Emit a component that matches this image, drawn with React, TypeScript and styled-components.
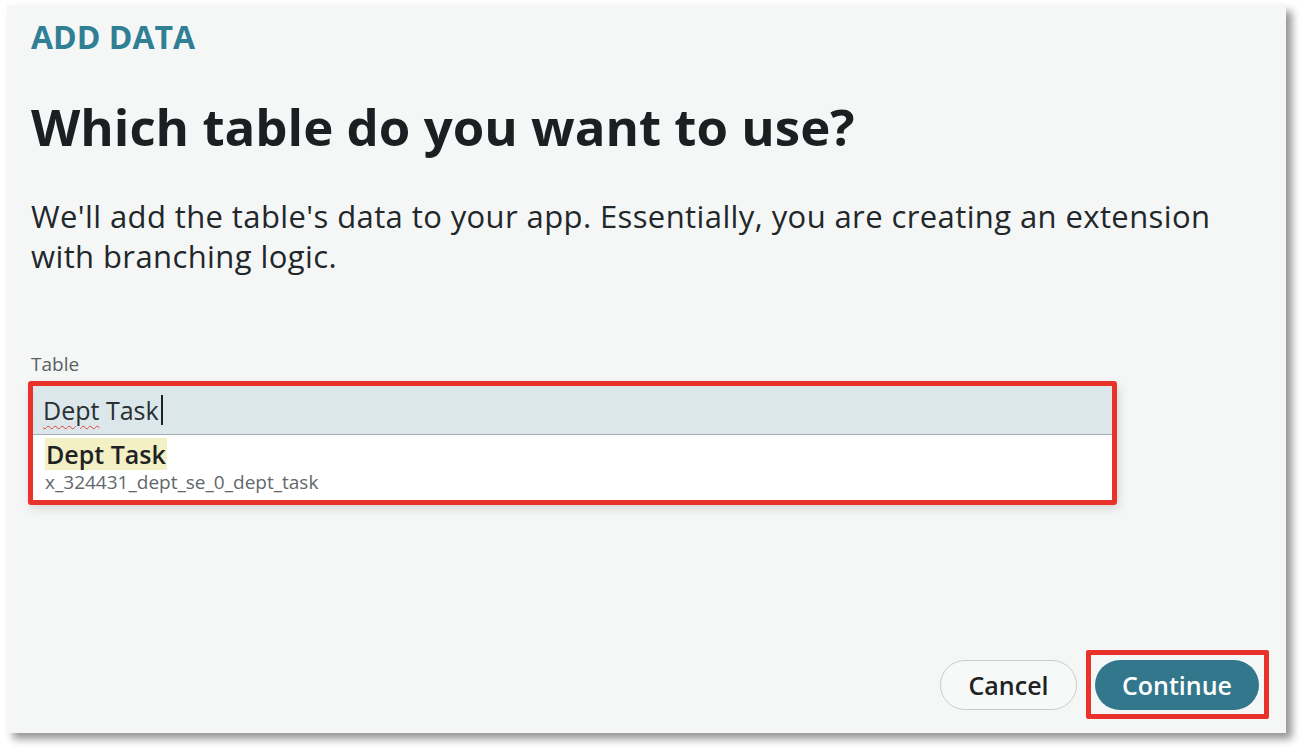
import React from "react";
import styled, { createGlobalStyle } from "styled-components";

const GlobalStyle = createGlobalStyle`
  html, body {
    margin: 0;
    padding: 0;
    background: #ffffff;
  }
  body {
    font-family: "Open Sans", "Noto Sans", sans-serif;
  }
  * { box-sizing: border-box; }
`;

const Page = styled.div`
  padding: 5px 0 0 7px;
  width: 1306px;
  height: 754px;
  overflow: hidden;
`;

const Panel = styled.section`
  width: 1279px;
  height: 728px;
  background: #f5f7f7;
  box-shadow: 6px 6px 8px rgba(0, 0, 0, 0.42);
  padding: 12px 17px 14px 24px;
  display: flex;
  flex-direction: column;
`;

const Eyebrow = styled.div`
  font-size: 32px;
  line-height: 40px;
  font-weight: 700;
  color: #2f7f95;
`;

const Title = styled.h1`
  margin: 37px 0 0;
  font-size: 51px;
  line-height: 64px;
  font-weight: 700;
  color: #1b1f21;
`;

const Lead = styled.p`
  margin: 38px 0 0;
  font-size: 31px;
  line-height: 40px;
  letter-spacing: 0.4px;
  font-weight: 400;
  color: #22272a;
  max-width: 1210px;
`;

const FieldLabel = styled.label`
  display: block;
  margin-top: 76px;
  font-size: 19px;
  line-height: 24px;
  color: #5a6063;
`;

const Highlight = styled.div`
  margin: 5px 0 0 -3px;
  width: 1089px;
  border: 5px solid #e8322a;
  border-radius: 3px;
  box-shadow: 2px 4px 10px rgba(0, 0, 0, 0.12);
`;

const InputBox = styled.div`
  height: 49px;
  background: #dce7eb;
  border-bottom: 1px solid #a5aeb2;
  padding: 0 10px;
  display: flex;
  align-items: center;
  font-size: 25px;
  color: #2a2f32;
`;

const Misspelled = styled.span`
  text-decoration: underline wavy #e0403a;
  text-decoration-thickness: 1px;
  text-underline-offset: 5px;
`;

const Caret = styled.span`
  display: inline-block;
  width: 2px;
  height: 30px;
  background: #1d2224;
  margin-left: 2px;
`;

const Options = styled.ul`
  list-style: none;
  margin: 0;
  padding: 3px 12px 6px;
  background: #ffffff;
`;

const Option = styled.li`
  display: flex;
  flex-direction: column;
  align-items: flex-start;
`;

const OptionName = styled.mark`
  display: inline-block;
  background: #f3f0c5;
  color: #1e2224;
  font-size: 25px;
  line-height: 32px;
  font-weight: 600;
  padding: 0 1px;
`;

const OptionKey = styled.span`
  font-size: 19px;
  line-height: 24px;
  color: #62686b;
`;

const Footer = styled.footer`
  margin-top: auto;
  display: flex;
  justify-content: flex-end;
  align-items: center;
  gap: 9px;
`;

const Button = styled.button<{ $primary?: boolean }>`
  height: 50px;
  border-radius: 25px;
  font-family: "Open Sans", "Noto Sans", sans-serif;
  font-size: 25px;
  font-weight: 600;
  cursor: pointer;
  padding: 0;
  width: ${(p) => (p.$primary ? "164px" : "137px")};
  background: ${(p) => (p.$primary ? "#32778b" : "#f7f8f8")};
  color: ${(p) => (p.$primary ? "#ffffff" : "#1e2224")};
  border: ${(p) => (p.$primary ? "none" : "1px solid #c9cccd")};
`;

const CalloutBox = styled.div`
  border: 5px solid #e8322a;
  border-radius: 2px;
  padding: 5px 5px 4px 4px;
  display: flex;
`;

export default function App() {
  return (
    <Page>
      <GlobalStyle />
      <Panel>
        <Eyebrow>ADD DATA</Eyebrow>
        <Title>Which table do you want to use?</Title>
        <Lead>
          We'll add the table's data to your app. Essentially, you are creating
          an extension with branching logic.
        </Lead>
        <FieldLabel>Table</FieldLabel>
        <Highlight>
          <InputBox role="textbox">
            <Misspelled>Dept</Misspelled>&nbsp;Task
            <Caret />
          </InputBox>
          <Options>
            <Option>
              <OptionName>Dept Task</OptionName>
              <OptionKey>x_324431_dept_se_0_dept_task</OptionKey>
            </Option>
          </Options>
        </Highlight>
        <Footer>
          <Button>Cancel</Button>
          <CalloutBox>
            <Button $primary>Continue</Button>
          </CalloutBox>
        </Footer>
      </Panel>
    </Page>
  );
}
